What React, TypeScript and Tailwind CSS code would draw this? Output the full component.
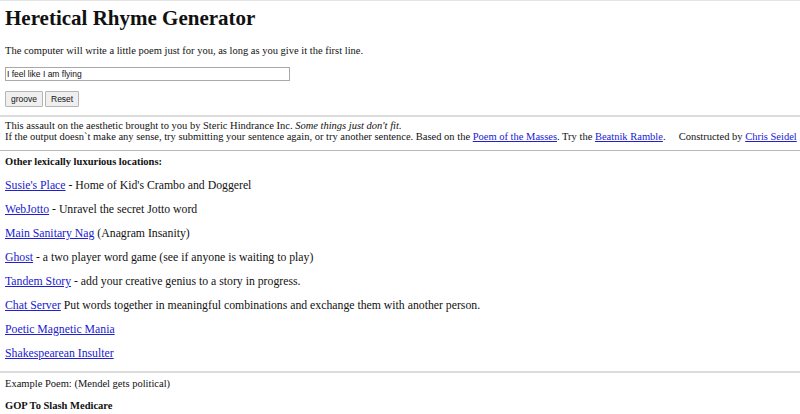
const link = "text-[#2020d0] underline";

const places: { name: string; desc: string }[] = [
  { name: "Susie's Place", desc: " - Home of Kid's Crambo and Doggerel" },
  { name: "WebJotto", desc: " - Unravel the secret Jotto word" },
  { name: "Main Sanitary Nag", desc: " (Anagram Insanity)" },
  { name: "Ghost", desc: " - a two player word game (see if anyone is waiting to play)" },
  { name: "Tandem Story", desc: " - add your creative genius to a story in progress." },
  { name: "Chat Server", desc: " Put words together in meaningful combinations and exchange them with another person." },
  { name: "Poetic Magnetic Mania", desc: "" },
  { name: "Shakespearean Insulter", desc: "" },
];

export default function App() {
  return (
    <div className="w-[800px] h-[414px] overflow-hidden bg-white text-[#111] font-['Liberation_Serif',serif]">
      <div className="h-px bg-[#e4e4e4]" />
      <div className="px-[5px]">
        <h1 className="mt-[5px] text-[21px] leading-[25px] font-bold">Heretical Rhyme Generator</h1>
        <p className="mt-[14px] text-[10.5px] leading-[11px]">
          The computer will write a little poem just for you, as long as you give it the first line.
        </p>
        <input
          type="text"
          defaultValue="I feel like I am flying"
          className="mt-[11px] block w-[285px] h-[14px] border border-[#a9a9a9] px-[1px] text-[8.5px] leading-[12px] font-['Liberation_Sans',sans-serif] outline-none"
        />
        <div className="mt-[10px] flex gap-[2px]">
          <button className="h-[16px] px-[5px] bg-[#efefef] border border-[#b5b5b5] rounded-[1px] text-[8.5px] leading-[14px] font-['Liberation_Sans',sans-serif]">
            groove
          </button>
          <button className="h-[16px] px-[5px] bg-[#efefef] border border-[#b5b5b5] rounded-[1px] text-[8.5px] leading-[14px] font-['Liberation_Sans',sans-serif]">
            Reset
          </button>
        </div>
      </div>
      <div className="mt-[8px] h-[2px] bg-[#dcdcdc]" />
      <div className="px-[5px] whitespace-nowrap">
        <p className="mt-[3px] text-[10.5px] leading-[11px]">
          This assault on the aesthetic brought to you by Steric Hindrance Inc. <i>Some things just don't fit.</i>
        </p>
        <p className="text-[10.5px] leading-[11px]">
          If the output doesn`t make any sense, try submitting your sentence again, or try another sentence. Based on
          the <a className={link}>Poem of the Masses</a>. Try the <a className={link}>Beatnik Ramble</a>.
          {"\u00a0\u00a0\u00a0\u00a0 "}Constructed by <a className={link}>Chris Seidel</a>
        </p>
      </div>
      <div className="mt-[8px] h-px bg-[#b8b8b8]" />
      <div className="px-[5px]">
        <p className="mt-[5px] text-[10.5px] leading-[11px] font-bold">Other lexically luxurious locations:</p>
        <div className="mt-[12px] flex flex-col gap-[11px] text-[11.75px] leading-[13px]">
          {places.map((p) => (
            <p key={p.name}>
              <a className={link}>{p.name}</a>
              {p.desc}
            </p>
          ))}
        </div>
      </div>
      <div className="mt-[11px] h-[2px] bg-[#dcdcdc]" />
      <div className="px-[5px]">
        <p className="mt-[5px] text-[10.5px] leading-[11px]">Example Poem: (Mendel gets political)</p>
        <p className="mt-[11px] text-[10.5px] leading-[11px] font-bold">GOP To Slash Medicare</p>
      </div>
    </div>
  );
}
